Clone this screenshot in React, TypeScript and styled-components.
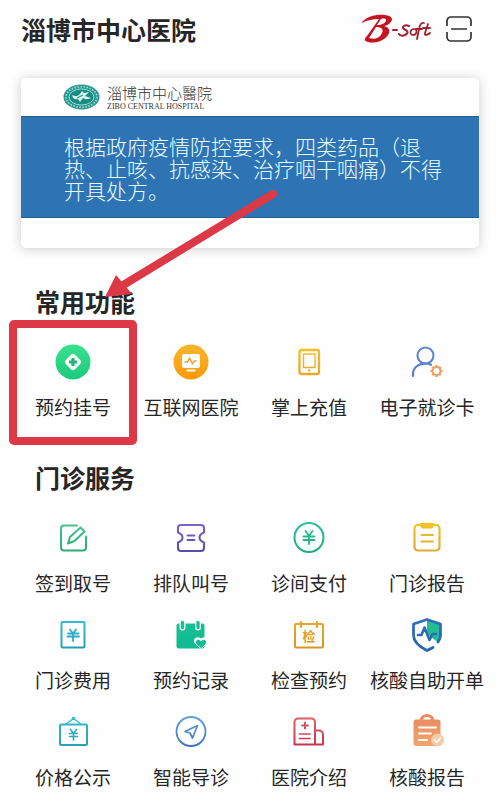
import React from "react";
import styled, { createGlobalStyle } from "styled-components";

const GlobalStyle = createGlobalStyle`
  * { box-sizing: border-box; }
  body {
    margin: 0;
    background: #fefefe;
    color: #262626;
    font-family: "Noto Sans CJK SC", sans-serif;
  }
`;

const Page = styled.main`
  position: relative;
  overflow: hidden;
`;

const Header = styled.header`
  display: flex;
  align-items: center;
  gap: 12px;
  height: 58px;
  padding: 0 28px 0 21px;
`;

const HospitalName = styled.h1`
  flex: 1;
  margin: 0;
  font-size: 25px;
  line-height: 36px;
  font-weight: 700;
`;

const ScanButton = styled.button`
  display: flex;
  padding: 0;
  border: 0;
  background: none;
  color: #333;
`;

const Banner = styled.section`
  margin: 20px 21px 0;
  padding-bottom: 30px;
  border-radius: 5px;
  background: #fff;
  box-shadow: 0 1px 12px rgba(0, 0, 0, 0.2);
`;

const BannerBrand = styled.div`
  display: flex;
  align-items: center;
  gap: 7px;
  height: 38px;
  padding-left: 42px;
`;

const BrandText = styled.div`
  display: flex;
  flex-direction: column;
  color: #333;
`;

const BrandName = styled.span`
  font-family: "Noto Sans CJK TC", sans-serif;
  font-size: 15px;
  line-height: 18px;
  font-weight: 300;
`;

const BrandLatin = styled.span`
  font-family: "Liberation Serif", serif;
  font-size: 8px;
  line-height: 9px;
`;

const Notice = styled.p`
  min-height: 102px;
  margin: 0;
  padding: 18px 0 0 43px;
  border-top: 1px solid #235f99;
  border-bottom: 1px solid #235f99;
  background: #2e74b5;
  color: #eaffff;
  font-size: 21px;
  line-height: 22px;
  font-weight: 300;
`;

const Section = styled.section`
  padding-top: 35px;
`;

const SectionTitle = styled.h2`
  margin: 0 35px;
  font-size: 25px;
  line-height: 36px;
  font-weight: 700;
`;

const Tiles = styled.div`
  display: grid;
  grid-template-columns: repeat(4, 1fr);
  row-gap: 13px;
  padding: 21px 14px 0;
`;

const Tile = styled.button<{ $marked?: boolean }>`
  position: relative;
  display: flex;
  flex-direction: column;
  align-items: center;
  gap: 9px;
  height: 84px;
  padding: 0;
  border: 0;
  background: none;
  color: #262626;
  font: inherit;
  font-size: 19px;
  line-height: 28px;
  white-space: nowrap;

  ${(p) =>
    p.$marked &&
    `&::after {
      content: "";
      position: absolute;
      inset: -20px -5px -21px;
      border: 8px solid #dc3845;
      border-radius: 5px;
    }`}
`;

const Glyph = styled.svg`
  display: block;
  flex: none;
  width: 44px;
  height: 44px;
`;

const Arrow = styled.svg`
  position: absolute;
  top: 180px;
  left: 80px;
  width: 210px;
  height: 140px;
  pointer-events: none;
`;

function Icon({ from, to, children }: { from: string; to: string; children: (paint: string) => React.ReactNode }) {
  const id = React.useId();
  return (
    <Glyph viewBox="0 0 44 44" fill="none" strokeLinecap="round" strokeLinejoin="round" aria-hidden="true">
      <defs>
        <linearGradient id={id} gradientUnits="userSpaceOnUse" x1="0" y1="6" x2="0" y2="38">
          <stop stopColor={from} />
          <stop offset="1" stopColor={to} />
        </linearGradient>
      </defs>
      {children(`url(#${id})`)}
    </Glyph>
  );
}

const common = [
  {
    label: "预约挂号",
    icon: (
      <Icon from="#38e08e" to="#1dcb7c">
        {(p) => (
          <>
            <circle cx="22" cy="22" r="17.5" fill={p} />
            <rect x="15.5" y="15.5" width="13" height="13" rx="2.5" fill="#fff" transform="rotate(45 22 22)" />
            <path d="M22 18v8M18 22h8" stroke="#20b778" strokeWidth="3.2" strokeLinecap="butt" />
          </>
        )}
      </Icon>
    ),
  },
  {
    label: "互联网医院",
    icon: (
      <Icon from="#f9b52b" to="#fb9a0a">
        {(p) => (
          <>
            <circle cx="22" cy="22" r="17.5" fill={p} />
            <rect x="13" y="14" width="18" height="14" rx="2" fill="#fff" />
            <path d="M18.5 30.5h7" stroke="#fff" strokeWidth="2.2" />
            <path d="M16 22h2.5l2-4 3 6 1.5-3h2" stroke="#f39b22" strokeWidth="1.4" />
          </>
        )}
      </Icon>
    ),
  },
  {
    label: "掌上充值",
    icon: (
      <Icon from="#f2c12c" to="#e5a526">
        {(p) => (
          <>
            <rect x="12.5" y="10" width="19.5" height="24" rx="2" stroke={p} strokeWidth="2.3" />
            <rect x="16.5" y="14" width="11.5" height="13.5" stroke={p} strokeWidth="1.4" />
            <circle cx="22.2" cy="30.4" r="1.2" fill={p} />
          </>
        )}
      </Icon>
    ),
  },
  {
    label: "电子就诊卡",
    icon: (
      <Icon from="#668ad3" to="#4e79cd">
        {(p) => (
          <>
            <circle cx="20.5" cy="15.5" r="8" stroke={p} strokeWidth="2.1" />
            <path d="M8 36v-2c0-6 5-10.5 12.5-10.5 2 0 4 .5 5.5 1.3" stroke={p} strokeWidth="2.1" />
            <circle cx="31.5" cy="31" r="3.9" stroke="#eca064" strokeWidth="2" />
            <path
              d="M31.5 25v2M31.5 35v2M25.5 31h2M35.5 31h2M27.3 26.8l1.4 1.4M34.3 33.8l1.4 1.4M27.3 35.2l1.4-1.4M34.3 28.2l1.4-1.4"
              stroke="#eca064"
              strokeWidth="2.4"
              strokeLinecap="butt"
            />
          </>
        )}
      </Icon>
    ),
  },
];

const services = [
  {
    label: "签到取号",
    icon: (
      <Icon from="#46c78f" to="#2da772">
        {(p) => (
          <>
            <path d="M26 9.5H13a3 3 0 0 0-3 3v19a3 3 0 0 0 3 3h19a3 3 0 0 0 3-3V20.5" stroke={p} strokeWidth="2" />
            <path d="M17 27.5l2-6.5L29.5 11.5l4 4L23.5 25z" stroke={p} strokeWidth="2" />
          </>
        )}
      </Icon>
    ),
  },
  {
    label: "排队叫号",
    icon: (
      <Icon from="#8066c9" to="#534baa">
        {(p) => (
          <>
            <path
              d="M12 9h20a3 3 0 0 1 3 3v4.5c-2.5 1-4.5 3-4.5 5s2 4 4.5 5V32a3 3 0 0 1-3 3H12a3 3 0 0 1-3-3v-5.5c2.5-1 4.5-3 4.5-5s-2-4-4.5-5V12a3 3 0 0 1 3-3z"
              stroke={p}
              strokeWidth="2.1"
            />
            <path d="M18.5 19.5h7M18.5 24h7" stroke={p} strokeWidth="1.8" />
          </>
        )}
      </Icon>
    ),
  },
  {
    label: "诊间支付",
    icon: (
      <Icon from="#29c297" to="#1cab80">
        {(p) => (
          <>
            <circle cx="22" cy="21.5" r="14.5" stroke={p} strokeWidth="2" />
            <path d="M18.5 15l3.5 5 3.5-5M22 20v8M16.5 20.5h11M16.5 24h11" stroke={p} strokeWidth="1.8" />
          </>
        )}
      </Icon>
    ),
  },
  {
    label: "门诊报告",
    icon: (
      <Icon from="#f1c51e" to="#dfa739">
        {(p) => (
          <>
            <rect x="9.5" y="9" width="25" height="25.5" rx="3.5" stroke={p} strokeWidth="2.2" />
            <path d="M15.5 7.5h13v2L27 12H17l-1.5-2.5z" fill={p} stroke={p} />
            <path d="M16.5 19H28M16.5 25.5H28" stroke={p} strokeWidth="2" />
          </>
        )}
      </Icon>
    ),
  },
  {
    label: "门诊费用",
    icon: (
      <Icon from="#35bed3" to="#2498ba">
        {(p) => (
          <>
            <rect x="10.5" y="9" width="23" height="25.5" rx="1" stroke={p} strokeWidth="2" />
            <path d="M19 16.5l3 4 3-4M22 21v7M17 20.5h10.5M16.5 23.5H28" stroke={p} strokeWidth="1.8" />
          </>
        )}
      </Icon>
    ),
  },
  {
    label: "预约记录",
    icon: (
      <Icon from="#15c297" to="#11b98f">
        {(p) => (
          <>
            <rect x="7.5" y="10.5" width="28" height="25" rx="2" fill={p} />
            <path d="M13.5 9v5.5M29 9v5.5" stroke="#fff" strokeWidth="6" />
            <path d="M13.5 9.5v5M29 9.5v5" stroke={p} strokeWidth="3.4" />
            <path d="M32 36l-6-5.5c-3-4 1.5-8.5 6-5 4.5-3.500 9 1 6 5z" fill="#fff" />
            <path d="M32 34.5l-4.2-3.8c-2-2.8 1.2-5 4.2-2 3-3 6.2-.8 4.2 2z" fill={p} stroke={p} />
          </>
        )}
      </Icon>
    ),
  },
  {
    label: "检查预约",
    icon: (
      <Icon from="#eba82b" to="#d99225">
        {(p) => (
          <>
            <rect x="8" y="11" width="28" height="23.5" rx="1" stroke={p} strokeWidth="2" />
            <path d="M14 9v5M30 9v5" stroke={p} strokeWidth="2.2" />
            <text x="22" y="28" textAnchor="middle" fill={p} fontSize="13" fontWeight="700" fontFamily="Noto Sans CJK SC">
              检
            </text>
          </>
        )}
      </Icon>
    ),
  },
  {
    label: "核酸自助开单",
    icon: (
      <Icon from="#306fbc" to="#2864b2">
        {(p) => (
          <>
            <path d="M22 7l13 4v13l-2.5 5L22 21z" fill="#22bd91" />
            <path
              d="M28 34.5L22 37.5C14 33.5 8.5 29 8.5 22V11L22 6.5 35.5 11v11c0 3-1 5-2.5 7"
              stroke={p}
              strokeWidth="2.8"
            />
            <path d="M13 22h3.5l3-7.5 5 12.5 3-6H31" stroke={p} strokeWidth="2.6" />
          </>
        )}
      </Icon>
    ),
  },
  {
    label: "价格公示",
    icon: (
      <Icon from="#31bdd1" to="#2b9eb9">
        {(p) => (
          <>
            <rect x="9" y="14.5" width="27" height="20.5" rx="1" stroke={p} strokeWidth="2" />
            <path d="M15 14l7.5-5.5L30 14" stroke={p} strokeWidth="1.3" />
            <circle cx="22.5" cy="8.5" r="1.8" fill={p} />
            <path d="M19.5 19.5l3 4 3-4M22.5 23.5V30M18.5 23.5h8M18.5 26.5h8" stroke={p} strokeWidth="1.6" />
          </>
        )}
      </Icon>
    ),
  },
  {
    label: "智能导诊",
    icon: (
      <Icon from="#61a0da" to="#3973b8">
        {(p) => (
          <>
            <circle cx="22" cy="21.5" r="14.5" stroke={p} strokeWidth="1.8" />
            <path d="M28.5 15.5L16 21.5l5 1.5 2.5 5z" stroke={p} strokeWidth="1.7" />
          </>
        )}
      </Icon>
    ),
  },
  {
    label: "医院介绍",
    icon: (
      <Icon from="#de6468" to="#c5304e">
        {(p) => (
          <>
            <path
              d="M28 34.5H7.5V12A3.5 3.5 0 0 1 11 8.5h13.5A3.5 3.5 0 0 1 28 12zM28 20.5h4a4 4 0 0 1 4 4v10h-8"
              stroke={p}
              strokeWidth="2"
            />
            <path d="M18 12.5v6M15 15.5h6" stroke={p} strokeWidth="2" />
            <path d="M12.5 24H23M12.5 28.5H23" stroke={p} strokeWidth="1.7" />
          </>
        )}
      </Icon>
    ),
  },
  {
    label: "核酸报告",
    icon: (
      <Icon from="#e98c62" to="#f0a56e">
        {(p) => (
          <>
            <rect x="8.5" y="9.5" width="27" height="26.5" rx="3" fill={p} />
            <path d="M16.5 10a5.5 4.5 0 0 1 11 0" stroke={p} strokeWidth="3.2" />
            <path d="M14 17.5h17M14 23.5h12M14 30h8" stroke="#fff" strokeWidth="2" />
            <circle cx="32.5" cy="30" r="6.5" fill="#f5cba8" />
            <path d="M29.5 30l2.3 2.3 3.7-4.3" stroke="#fff" strokeWidth="1.6" />
          </>
        )}
      </Icon>
    ),
  },
];

function BSoftLogo() {
  return (
    <svg width="73" height="32" viewBox="0 0 73 32" role="img" aria-label="B-Soft">
      <path
        d="M1 9C7 3 15 1 24 2c7 1 9 4 5 8-2 2-4 3-6 3 5 1 7 5 4 9-4 6-13 9-20 7-4-1-4-3-1-6L18 6C12 6 6 7 1 10zM20 6l-4 6c5 0 8-2 9-4 1-2-1-3-5-2zM15 14L8 25c5 2 11 0 13-5 2-4-1-6-6-6z"
        fill="#c41424"
        fillRule="evenodd"
      />
      <g fill="none" stroke="#a3202f" strokeLinecap="round" strokeLinejoin="round">
        <path d="M32 17h4" strokeWidth="2" />
        <path d="M48 13c-4-2-8 1-5 3 4 2 5 4 1 6-2 1-5 1-6-1" strokeWidth="2" />
        <path d="M53 16c-4 0-5 6-1 6s5-6 1-6z" strokeWidth="1.7" />
        <path d="M63 10c-3-1-4 2-5 6l-2 10M55 16h6" strokeWidth="1.8" />
        <path d="M67 11l-3 9c-1 3 3 2 5 0M62 15h7" strokeWidth="1.8" />
      </g>
    </svg>
  );
}

function HospitalSeal() {
  return (
    <svg width="37" height="26" viewBox="0 0 37 26" aria-hidden="true">
      <ellipse cx="18.5" cy="13" rx="18" ry="12.5" fill="#27988f" />
      <ellipse
        cx="18.5"
        cy="13"
        rx="15.5"
        ry="10.3"
        fill="none"
        stroke="#a9dcd5"
        strokeWidth="1.6"
        strokeDasharray="1.5 1.5"
      />
      <ellipse cx="18.5" cy="13" rx="12.5" ry="8" fill="#148d84" stroke="#c6e8e3" strokeWidth="0.8" />
      <path d="M9 11c4 2 6 1 8-1l2-3 2 2 5-1-4 4 6 2c-4 2-6 1-8 0l-3 4-2-3c-3 1-5 0-6-4z" fill="#d9f3ef" />
      <path d="M14 14l6-3" stroke="#27988f" strokeWidth="1.2" />
    </svg>
  );
}

export default function App() {
  return (
    <Page>
      <GlobalStyle />
      <Header>
        <HospitalName>淄博市中心医院</HospitalName>
        <BSoftLogo />
        <ScanButton type="button" aria-label="扫一扫">
          <svg width="26" height="26" viewBox="0 0 26 26" fill="none" stroke="currentColor" strokeWidth="1.7">
            <path d="M1 10V5a4 4 0 0 1 4-4h16a4 4 0 0 1 4 4v5M1 16v5a4 4 0 0 0 4 4h16a4 4 0 0 0 4-4v-5M5 13h16" />
          </svg>
        </ScanButton>
      </Header>

      <Banner>
        <BannerBrand>
          <HospitalSeal />
          <BrandText>
            <BrandName lang="zh-Hant">淄博市中心醫院</BrandName>
            <BrandLatin>ZIBO CENTRAL HOSPITAL</BrandLatin>
          </BrandText>
        </BannerBrand>
        <Notice>
          根据政府疫情防控要求，四类药品（退
          <br />
          热、止咳、抗感染、治疗咽干咽痛）不得
          <br />
          开具处方。
        </Notice>
      </Banner>

      <Section>
        <SectionTitle>常用功能</SectionTitle>
        <Tiles>
          {common.map((item, i) => (
            <Tile key={item.label} type="button" $marked={i === 0}>
              {item.icon}
              {item.label}
            </Tile>
          ))}
        </Tiles>
      </Section>

      <Section>
        <SectionTitle>门诊服务</SectionTitle>
        <Tiles>
          {services.map((item) => (
            <Tile key={item.label} type="button">
              {item.icon}
              {item.label}
            </Tile>
          ))}
        </Tiles>
      </Section>

      <Arrow viewBox="0 0 210 140" aria-hidden="true">
        <path d="M193 14L40 107" stroke="#dc3845" strokeWidth="8" strokeLinecap="round" />
        <path d="M25 117L36 95l16 19z" fill="#dc3845" />
      </Arrow>
    </Page>
  );
}
